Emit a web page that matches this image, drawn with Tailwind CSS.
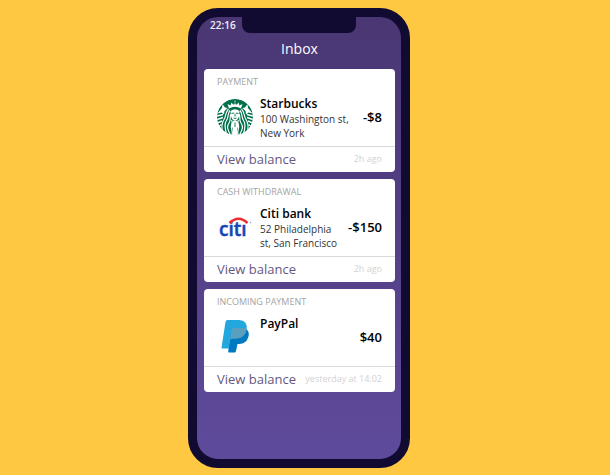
<!DOCTYPE html>
<html lang="en">
<head>
<meta charset="utf-8">
<meta name="viewport" content="width=device-width, initial-scale=1">
<title>Inbox</title>
<script src="https://cdn.jsdelivr.net/npm/@tailwindcss/browser@4"></script>
</head>
<body class="flex min-h-screen items-start justify-center bg-[#ffc843] pt-2 pr-3 font-['Open_Sans',sans-serif]">
<main class="relative flex min-h-[460px] w-full max-w-[222px] flex-col rounded-[30px] border-[9px] border-[#120b31] bg-linear-to-b from-[#493672] to-[#5f4b9c] bg-origin-border pr-1.5 pl-[7px]">
  <div class="absolute top-0 left-[45px] h-4 w-[114px] rounded-b-lg bg-[#120b31]" aria-hidden="true"></div>
  <time class="pl-1.5 text-[10px] leading-4 font-semibold text-[#f3f1f7]">22:16</time>
  <h1 class="mt-1.5 text-center text-sm leading-5 text-white">Inbox</h1>

  <div class="mt-2.5 flex flex-col gap-[7px]">
    <article class="rounded bg-white">
      <div class="px-[13px] py-1.5">
        <h2 class="text-[9px] leading-[14px] text-[#a3a3a3]">PAYMENT</h2>
        <div class="mt-1.5 flex min-h-[45px] items-center">
          <svg class="mb-0.5 size-9 shrink-0" viewBox="0 0 72 72" role="img" aria-label="Starbucks logo">
            <defs><clipPath id="disc"><circle cx="36" cy="36" r="36"/></clipPath></defs>
            <g clip-path="url(#disc)">
              <circle cx="36" cy="36" r="36" fill="#00704a"/>
              <g fill="none" stroke="#fff" stroke-width="2.4">
                <path d="M26 23C20 30 24 36 19 43S15 58 20 72"/>
                <path d="M23 20C15 29 19 34 14 41S8 55 12 69"/>
                <path d="M28 30C24 37 29 41 24 48S21 61 27 72"/>
                <path d="M29 42C33 48 27 52 29 58S31 67 30 72"/>
                <path d="M46 23C52 30 48 36 53 43S57 58 52 72"/>
                <path d="M49 20C57 29 53 34 58 41S64 55 60 69"/>
                <path d="M44 30C48 37 43 41 48 48S51 61 45 72"/>
                <path d="M43 42C39 48 45 52 43 58S41 67 42 72"/>
                <path d="M0 34L12 31M0 41L12 37M0 48L10 44M2 56L9 51M72 34L60 31M72 41L60 37M72 48L62 44M70 56L63 51" stroke-width="3"/>
              </g>
              <g fill="#fff">
                <path d="M27 24Q36 17 45 24L44 35Q41 43 36 44Q31 43 28 35Z"/>
                <path d="M32 44h8l4 8-4 8 1 12H31l1-12-4-8Z"/>
                <path d="M24 19L21 10l6 3 2-6 4 5 3-10 3 10 4-5 2 6 6-3-3 9Q36 12 24 19Z"/>
                <path d="M1 29L10 18l1-8 5 7 5 1-6 6-1 7-5-4ZM71 29L62 18l-1-8-5 7-5 1 6 6 1 7 5-4Z"/>
              </g>
              <path d="M29 29l5-1M38 28l5 1M36 29v6M33 38q3 2 6 0M36 47v9M27 20q9-6 18 0" fill="none" stroke="#00704a" stroke-width="1.8"/>
              <path d="M36 5l1 2h2l-2 2 1 2-2-1-2 1 1-2-2-2h2Z" fill="#00704a"/>
              <path d="M33 58h6l2 14H31Z" fill="#fff"/>
            </g>
          </svg>
          <div class="ml-[7px] flex-1 self-start pt-px">
            <h3 class="text-xs leading-4 font-semibold text-black">Starbucks</h3>
            <p class="text-[10px] leading-[14px] text-[#333]">100 Washington st, New York</p>
          </div>
          <strong class="mb-0.5 ml-2 text-[13px] leading-4 font-semibold text-black">-$8</strong>
        </div>
      </div>
      <footer class="flex items-center justify-between border-t border-[#d9d9d9] px-[13px] pb-px">
        <a href="#starbucks" class="text-[13px] leading-6 text-[#65587f]">View balance</a>
        <time class="text-[9px] leading-6 text-[#d2d2d2]">2h ago</time>
      </footer>
    </article>

    <article class="rounded bg-white">
      <div class="px-[13px] py-1.5">
        <h2 class="text-[9px] leading-[14px] text-[#a3a3a3]">CASH WITHDRAWAL</h2>
        <div class="mt-1.5 flex min-h-[45px] items-center">
          <svg class="mb-0.5 size-9 shrink-0" viewBox="0 0 36 36" role="img" aria-label="Citi logo">
            <text x="2" y="27" font-family="Open Sans, sans-serif" font-size="19" font-weight="600" fill="#1546b5" stroke="#1546b5" stroke-width=".5">citı</text>
            <path d="M12.500 14Q21.500 5.500 30.500 14" fill="none" stroke="#ef2b2d" stroke-width="2.500"/>
            <circle cx="33.500" cy="13.500" r=".7" fill="#8aa3d8"/>
          </svg>
          <div class="ml-[7px] flex-1 self-start pt-px">
            <h3 class="text-xs leading-4 font-semibold text-black">Citi bank</h3>
            <p class="text-[10px] leading-[14px] text-[#333]">52 Philadelphia st, San Francisco</p>
          </div>
          <strong class="mb-0.5 ml-2 text-[13px] leading-4 font-semibold text-black">-$150</strong>
        </div>
      </div>
      <footer class="flex items-center justify-between border-t border-[#d9d9d9] px-[13px] pb-px">
        <a href="#citi" class="text-[13px] leading-6 text-[#65587f]">View balance</a>
        <time class="text-[9px] leading-6 text-[#d2d2d2]">2h ago</time>
      </footer>
    </article>

    <article class="rounded bg-white">
      <div class="px-[13px] py-1.5">
        <h2 class="text-[9px] leading-[14px] text-[#a3a3a3]">INCOMING PAYMENT</h2>
        <div class="mt-1.5 flex min-h-[45px] items-center">
          <svg class="mb-0.5 size-9 shrink-0" viewBox="0 0 36 36" role="img" aria-label="PayPal logo">
            <path d="M14 9H28Q33 12 31.500 17.500Q29.500 25 22 25H20.500L19 32Q18.800 33.500 17.500 33.500H12Q11 33.500 11.200 32.500Z" fill="#0079c1"/>
            <path d="M10.500 1H22Q31 1.500 29.500 10.500Q28 19.500 18.500 19.500H15Q13.500 19.500 13.200 21L11.800 29.500H5.500Q4.300 29.500 4.500 28.500L8.500 3Q8.800 1 10.500 1Z" fill="#23a7df"/>
            <path d="M16 9H27Q29 9 29.600 9.700Q28.500 19.500 18.500 19.500H15Q13.500 19.500 13.200 21L14.500 11Q14.800 9 16 9Z" fill="#5a9fbd"/>
          </svg>
          <div class="ml-[7px] flex-1 self-start pt-px">
            <h3 class="text-xs leading-4 font-semibold text-black">PayPal</h3>
          </div>
          <strong class="mb-0.5 ml-2 text-[13px] leading-4 font-semibold text-black">$40</strong>
        </div>
      </div>
      <footer class="flex items-center justify-between border-t border-[#d9d9d9] px-[13px] pb-px">
        <a href="#paypal" class="text-[13px] leading-6 text-[#65587f]">View balance</a>
        <time class="text-[9px] leading-6 text-[#d2d2d2]">yesterday at 14:02</time>
      </footer>
    </article>
  </div>
</main>
</body>
</html>
